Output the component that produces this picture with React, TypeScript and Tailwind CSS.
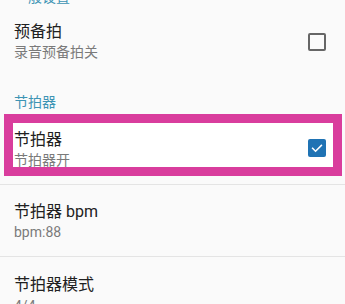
import React from "react";

const font = { fontFamily: 'Roboto, "Noto Sans CJK SC", sans-serif' };

function Unchecked() {
  return <div className="w-[18px] h-[18px] rounded-[2px] border-2 border-[#666666] shrink-0" />;
}

function Checked() {
  return (
    <div className="w-[18px] h-[18px] rounded-[2px] bg-[#1f73b4] shrink-0 flex items-center justify-center">
      <svg width="14" height="14" viewBox="0 0 24 24" fill="none">
        <path d="M4.5 12.5l5 5L19.5 7.5" stroke="white" strokeWidth="2.6" strokeLinecap="square" />
      </svg>
    </div>
  );
}

export default function App() {
  return (
    <div className="w-[345px] h-[304px] overflow-hidden bg-[#fafafa] relative" style={font}>
      <div className="-mt-[13px] pl-[14px] text-[14px] leading-[20px] text-[#3d94b4]">一般设置</div>

      <div className="flex items-center pl-[14px] pr-[19px] pt-[14px]">
        <div className="flex-1">
          <div className="text-[16px] leading-[22px] text-[#212121]">预备拍</div>
          <div className="text-[14px] leading-[19px] text-[#7a7a7a]">录音预备拍关</div>
        </div>
        <Unchecked />
      </div>

      <div className="mt-[30px] pl-[14px] text-[14px] leading-[20px] text-[#3d94b4]">节拍器</div>

      <div className="mt-[2px] ml-[4px] w-[338px] h-[62px] border-[9px] border-[#d93d9d] bg-white flex items-start overflow-hidden pl-[1px] pr-[7px]">
        <div className="flex-1 pt-[5px]">
          <div className="text-[16px] leading-[23px] text-[#212121]">节拍器</div>
          <div className="text-[14px] leading-[19px] text-[#7a7a7a]">节拍器开</div>
        </div>
        <div className="mt-[16px]">
          <Checked />
        </div>
      </div>

      <div className="mt-[8px] h-px bg-[#e4e4e4]" />

      <div className="pl-[14px] pt-[17px]">
        <div className="text-[16px] leading-[20px] text-[#212121]">节拍器 bpm</div>
        <div className="text-[14px] leading-[20px] text-[#7a7a7a]">bpm:88</div>
      </div>

      <div className="mt-[14px] h-px bg-[#e4e4e4]" />

      <div className="pl-[14px] pt-[16px]">
        <div className="text-[16px] leading-[23px] text-[#212121]">节拍器模式</div>
        <div className="text-[14px] leading-[20px] text-[#7a7a7a]">4/4</div>
      </div>
    </div>
  );
}
